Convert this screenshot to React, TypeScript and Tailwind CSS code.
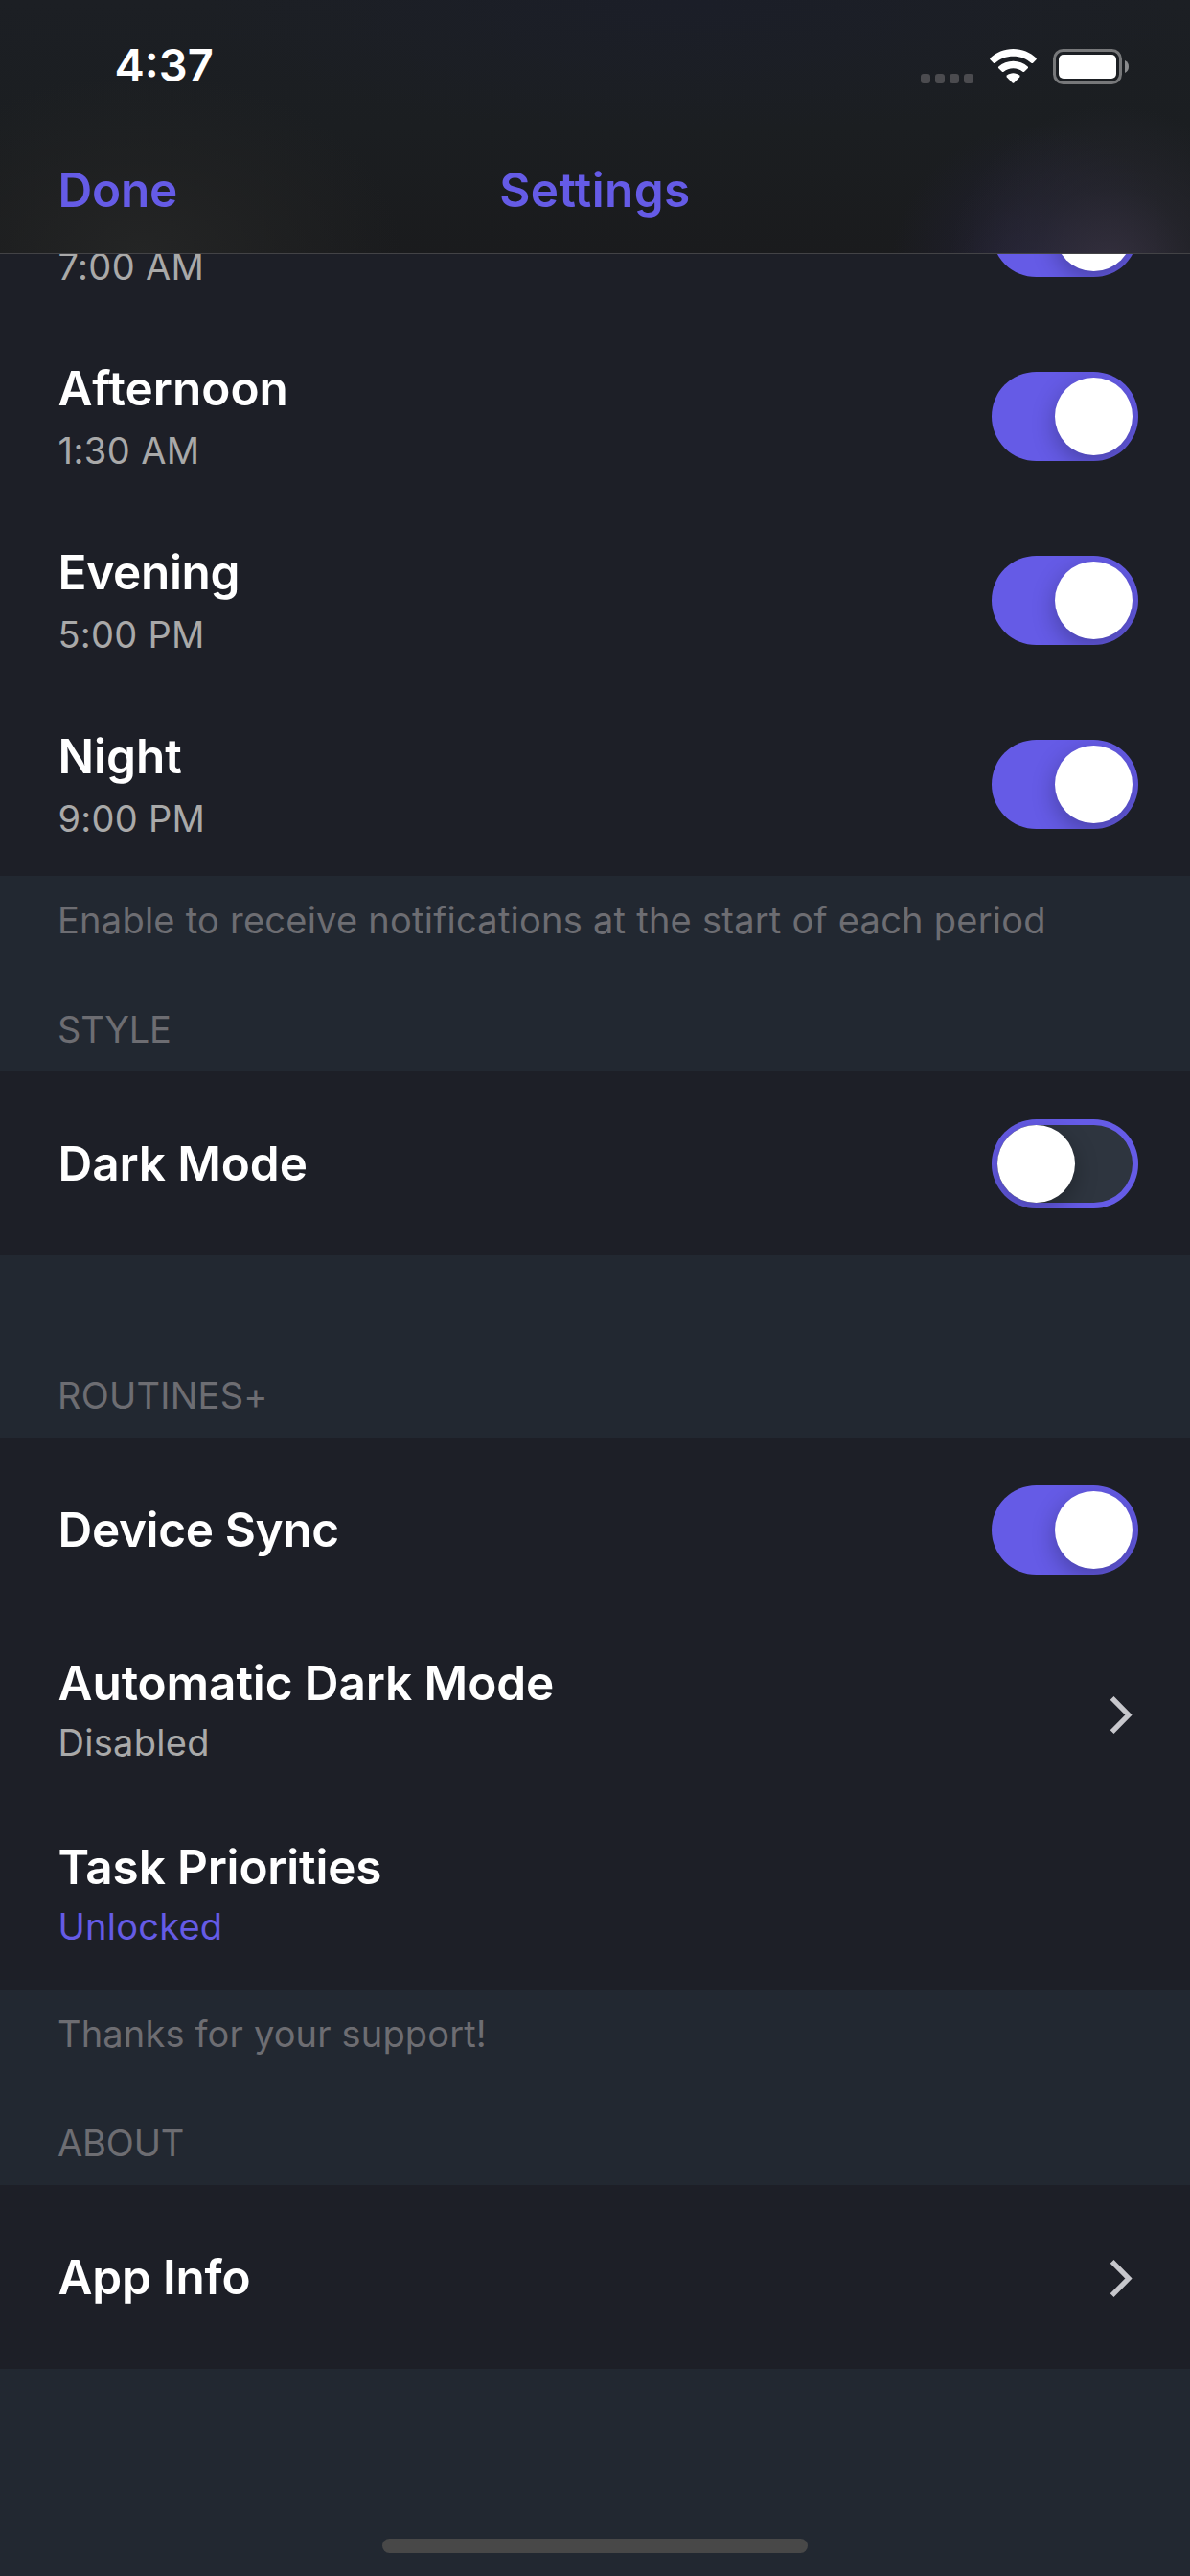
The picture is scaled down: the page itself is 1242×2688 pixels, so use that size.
import type { ReactNode } from "react";

function Toggle({ on }: { on: boolean }) {
  return (
    <div
      className={`flex h-[93px] w-[153px] shrink-0 overflow-hidden rounded-full p-[6px] ${
        on ? "justify-end bg-[#655be6]" : "justify-start bg-[#2e353f] shadow-[inset_0_0_0_6px_#655be6]"
      }`}
    >
      <div className="size-[81px] rounded-full bg-white shadow-[0_8px_24px_rgba(0,0,0,0.28)]" />
    </div>
  );
}

function Chevron() {
  return (
    <svg className="mr-[6px] h-[44px] w-[26px]" viewBox="0 0 26 44" fill="none" stroke="#c7c7cc" strokeWidth="5.3">
      <path d="M4.6 5.9 L21.9 23.5 L4.6 41.1" />
    </svg>
  );
}

type RowProps = {
  title?: string;
  titleClass?: string;
  sub?: string;
  subClass?: string;
  gapClass?: string;
  padClass?: string;
  children?: ReactNode;
};

function Row({ title, titleClass = "", sub, subClass = "", gapClass = "mt-[11px]", padClass = "pt-[37px]", children }: RowProps) {
  return (
    <div className="flex h-[192px] items-center justify-between pr-[54px] pl-[60.5px]">
      <div className={`h-full ${sub ? padClass : "pt-[66px]"}`}>
        <div className={`h-[60px] text-[49.5px] leading-[60px] font-semibold whitespace-nowrap text-white ${titleClass}`}>{title}</div>
        {sub && <div className={`text-[38px] leading-[48px] whitespace-nowrap ${gapClass} ${subClass}`}>{sub}</div>}
      </div>
      {children}
    </div>
  );
}

function Caption({ children, className = "" }: { children: ReactNode; className?: string }) {
  return <div className={`pl-[60px] text-[38px] leading-[48px] whitespace-nowrap text-[#6d6d72] ${className}`}>{children}</div>;
}

function StatusIcons() {
  return (
    <svg className="h-[44px] w-[222px]" viewBox="0 0 222 44">
      <g fill="#4b4b4f">
        <rect x="2" y="31" width="10" height="10" rx="3" />
        <rect x="17" y="31" width="10" height="10" rx="3" />
        <rect x="32" y="31" width="10" height="10" rx="3" />
        <rect x="47" y="31" width="10" height="10" rx="3" />
      </g>
      <g fill="#ffffff">
        <path d="M98.5 5 C107.8 5 116.4 8.6 122.5 14.5 Q123.3 15.3 122.5 16.2 L119.1 19.7 Q118.2 20.5 117.3 19.7 C112.3 15.2 105.7 12.7 98.5 12.7 C91.3 12.7 84.7 15.2 79.7 19.7 Q78.8 20.5 77.9 19.7 L74.5 16.2 Q73.7 15.3 74.5 14.5 C80.6 8.6 89.2 5 98.5 5 Z" />
        <path d="M98.5 17.7 C104.3 17.7 109.6 19.8 113.7 23.4 Q114.6 24.3 113.7 25.2 L110.1 28.7 Q109.3 29.5 108.4 28.7 C105.7 26.5 102.3 25.3 98.5 25.3 C94.7 25.3 91.3 26.5 88.6 28.7 Q87.7 29.5 86.9 28.7 L83.3 25.2 Q82.4 24.3 83.3 23.4 C87.4 19.8 92.7 17.7 98.5 17.7 Z" />
        <path d="M98.5 30.3 C101 30.3 103.3 31.2 105.1 32.6 Q106 33.5 105.2 34.4 L99.3 40.4 Q98.5 41.2 97.7 40.4 L91.8 34.4 Q91 33.5 91.9 32.6 C93.7 31.2 96 30.3 98.5 30.3 Z" />
      </g>
      <rect x="141.5" y="6.5" width="69" height="34" rx="9" fill="none" stroke="#77787a" strokeWidth="3" />
      <rect x="146" y="11" width="60" height="25" rx="5" fill="#ffffff" />
      <path d="M215 17 C218 18.3 219 21 219 23.5 C219 26 218 28.7 215 30 Z" fill="#8a8b8d" />
    </svg>
  );
}

function Header() {
  return (
    <header className="relative z-10 h-[265px] shrink-0 border-b border-[#434346] bg-[radial-gradient(ellipse_170px_170px_at_1160px_280px,rgba(56,51,66,0.85),rgba(44,43,54,0.5)_50%,rgba(32,34,38,0)_100%),radial-gradient(ellipse_150px_150px_at_1080px_280px,rgba(42,38,72,0.7),rgba(36,34,60,0.35)_50%,rgba(30,32,42,0)_100%),radial-gradient(ellipse_270px_190px_at_150px_265px,#242525,rgba(34,35,35,0.6)_50%,rgba(28,31,32,0)_100%),radial-gradient(ellipse_520px_140px_at_720px_0px,#1b1e28,rgba(27,30,38,0)_100%),linear-gradient(to_bottom,#1c1f24,#1b1e21_50%,#1a1b1d)]">
      <div className="flex h-[135px] items-center justify-between pr-[61px] pl-[119.5px]">
        <div className="text-[47px] leading-[56px] font-semibold text-white">4:37</div>
        <StatusIcons />
      </div>
      <div className="grid h-[129px] grid-cols-3 items-start px-[60.5px] pt-[33px] text-[49.5px] leading-[60px] font-semibold text-[#655be6]">
        <div className="tracking-[-0.2px]">Done</div>
        <div className="text-center tracking-[0.4px]">Settings</div>
      </div>
    </header>
  );
}

export default function App() {
  return (
    <div className="flex h-[2688px] w-[1242px] flex-col overflow-hidden bg-[#222831] font-['Inter','Liberation_Sans',sans-serif]">
      <Header />
      <div className="-mt-[119px] bg-[#1d1f27]">
        <Row sub="7:00 AM" subClass="text-[#a9a9a9] tracking-[0.33px]">
          <Toggle on />
        </Row>
        <Row title="Afternoon" sub="1:30 AM" subClass="text-[#a9a9a9] tracking-[0.42px]">
          <Toggle on />
        </Row>
        <Row title="Evening" titleClass="tracking-[-0.3px]" sub="5:00 PM" subClass="text-[#a9a9a9] tracking-[0.25px]">
          <Toggle on />
        </Row>
        <Row title="Night" sub="9:00 PM" subClass="text-[#a9a9a9] tracking-[0.25px]">
          <Toggle on />
        </Row>
      </div>

      <div className="flex h-[204px] flex-col justify-between pt-[22px] pb-[20px]">
        <Caption className="tracking-[0.25px]">Enable to receive notifications at the start of each period</Caption>
        <Caption className="tracking-[-0.25px]">STYLE</Caption>
      </div>
      <div className="bg-[#1d1f27]">
        <Row title="Dark Mode" titleClass="tracking-[-0.1px]">
          <Toggle on={false} />
        </Row>
      </div>

      <div className="flex h-[190px] flex-col justify-end pb-[20px]">
        <Caption className="tracking-[0.24px]">ROUTINES+</Caption>
      </div>
      <div className="bg-[#1d1f27]">
        <Row title="Device Sync" titleClass="tracking-[-0.36px]">
          <Toggle on />
        </Row>
        <Row
          title="Automatic Dark Mode"
          titleClass="tracking-[-0.09px]"
          sub="Disabled"
          subClass="text-[#a9a9a9] tracking-[0.31px]"
          gapClass="mt-[8px]"
          padClass="pt-[34px]"
        >
          <Chevron />
        </Row>
        <Row
          title="Task Priorities"
          titleClass="tracking-[-0.18px]"
          sub="Unlocked"
          subClass="text-[#655be6] tracking-[0.25px]"
          gapClass="mt-[8px]"
          padClass="pt-[34px]"
        />
      </div>

      <div className="flex h-[204px] flex-col justify-between pt-[22px] pb-[20px]">
        <Caption className="tracking-[0.16px]">Thanks for your support!</Caption>
        <Caption className="tracking-[-0.15px]">ABOUT</Caption>
      </div>
      <div className="bg-[#1d1f27]">
        <Row title="App Info" titleClass="tracking-[-0.19px]">
          <Chevron />
        </Row>
      </div>

      <div className="mt-auto mb-[24px] h-[15px] w-[444px] self-center rounded-full bg-[#484848]" />
    </div>
  );
}
